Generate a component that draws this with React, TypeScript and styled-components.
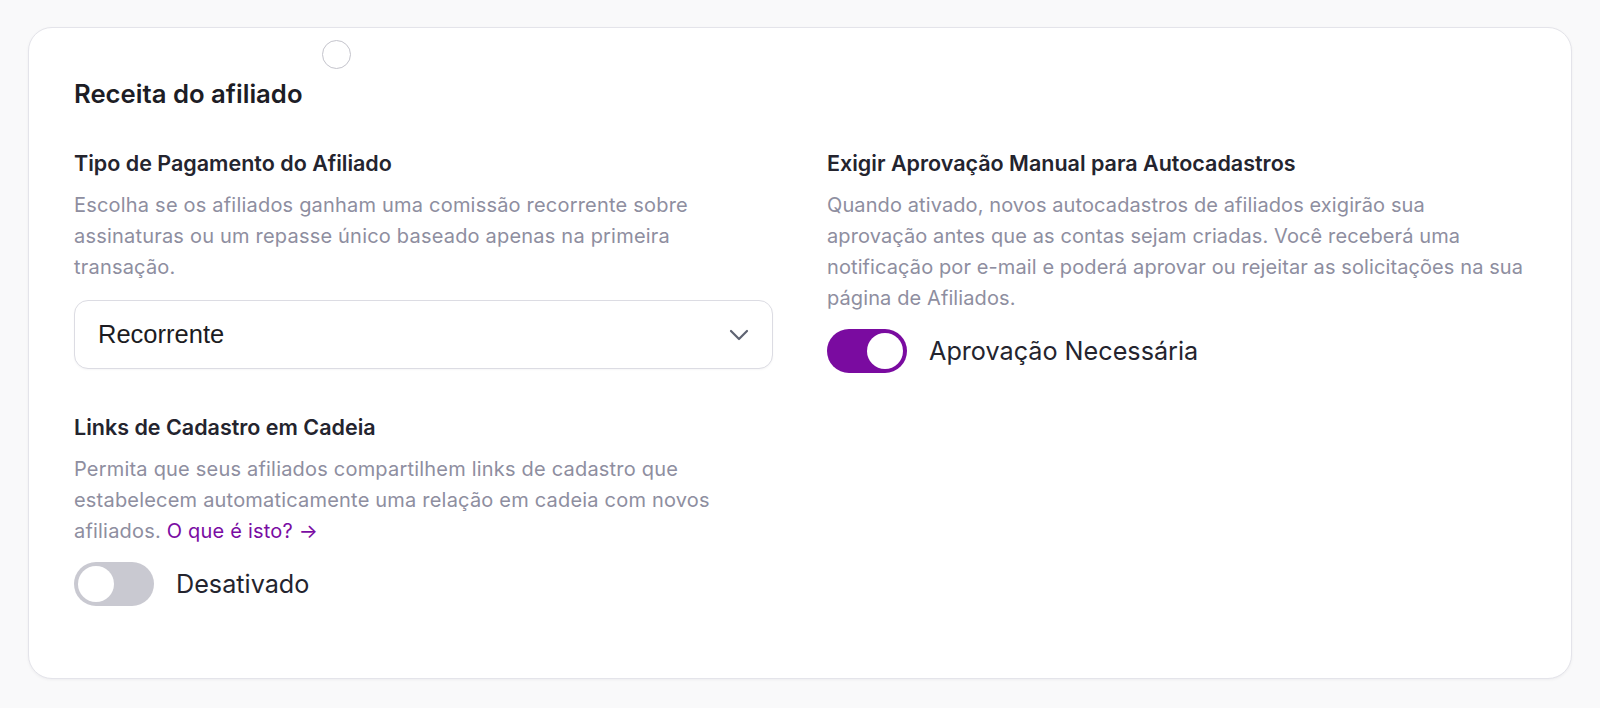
import React from 'react'
import styled, { createGlobalStyle } from 'styled-components'

const GlobalStyle = createGlobalStyle`
    html, body {
        margin: 0;
        padding: 0;
        background: #f9f9fa;
    }
    body {
        font-family: "Inter", "Noto Sans", sans-serif;
        -webkit-font-smoothing: antialiased;
    }
`

const Page = styled.div`
    padding: 27px 28px 30px 28px;
`

const Card = styled.section`
    position: relative;
    background: #ffffff;
    border: 1.5px solid #e4e4ea;
    border-radius: 24px;
    box-shadow: 0 1px 3px rgba(20, 20, 40, 0.05);
    padding: 50px 45px 72px 45px;
`

const Spinner = styled.span`
    position: absolute;
    top: 12px;
    left: 293px;
    width: 27px;
    height: 27px;
    border-radius: 50%;
    border: 1.5px solid #c4c4cc;
    background: #ffffff;
`

const Title = styled.h2`
    margin: 0 0 39px 0;
    font-size: 25.7px;
    line-height: 32px;
    font-weight: 600;
    color: #1d1d25;
`

const Columns = styled.div`
    display: grid;
    grid-template-columns: 1fr 1fr;
    column-gap: 54px;
    align-items: start;
`

const Column = styled.div`
    display: flex;
    flex-direction: column;
    gap: 44px;
`

const Field = styled.div`
    display: flex;
    flex-direction: column;
`

const Label = styled.h3`
    margin: 0 0 13px 0;
    font-size: 21.5px;
    line-height: 28px;
    font-weight: 600;
    color: #24242e;
`

const Description = styled.p<{ $tight?: boolean; $loose?: boolean }>`
    margin: 0 0 ${p => (p.$tight ? '15px' : '17px')} 0;
    font-size: 20px;
    line-height: 31px;
    letter-spacing: ${p => (p.$loose ? '0.2px' : '0.1px')};
    font-weight: 400;
    color: #8e8ea0;
`

const Link = styled.a`
    color: #7a0ca3;
    text-decoration: none;
`

const SelectBox = styled.div`
    display: flex;
    align-items: center;
    justify-content: space-between;
    height: 67px;
    padding: 0 23px 0 23px;
    border: 1.5px solid #dcdce3;
    border-radius: 14px;
    background: #ffffff;
    box-shadow: 0 1px 2px rgba(20, 20, 40, 0.04);
`

const SelectValue = styled.span`
    font-family: "Liberation Sans", Arial, sans-serif;
    font-size: 25.5px;
    color: #1c1c22;
`

const ToggleRow = styled.div`
    display: flex;
    align-items: center;
    gap: 22px;
`

const Track = styled.span<{ $on?: boolean }>`
    position: relative;
    flex: none;
    width: 80px;
    height: 44px;
    border-radius: 22px;
    background: ${p => (p.$on ? '#7a0ba0' : '#c9c9d1')};
`

const Knob = styled.span<{ $on?: boolean }>`
    position: absolute;
    top: 4px;
    left: ${p => (p.$on ? '40px' : '4px')};
    width: 36px;
    height: 36px;
    border-radius: 50%;
    background: #ffffff;
`

const ToggleText = styled.span`
    font-size: 25.2px;
    line-height: 32px;
    color: #24242e;
`

const Chevron = () => (
    <svg width="20" height="12" viewBox="0 0 20 12" fill="none">
        <path d="M2 2 L10 10 L18 2" stroke="#5e6372" strokeWidth="2.2" strokeLinecap="round" strokeLinejoin="round" />
    </svg>
)

const Toggle: React.FC<{ on?: boolean; label: string }> = ({ on, label }) => (
    <ToggleRow>
        <Track $on={on}><Knob $on={on} /></Track>
        <ToggleText>{label}</ToggleText>
    </ToggleRow>
)

const App: React.FC = () => {
    return (
        <Page>
            <GlobalStyle />
            <Card>
                <Spinner />
                <Title>Receita do afiliado</Title>
                <Columns>
                    <Column>
                        <Field>
                            <Label>Tipo de Pagamento do Afiliado</Label>
                            <Description $loose>
                                Escolha se os afiliados ganham uma comissão recorrente sobre assinaturas ou um repasse único baseado apenas na primeira transação.
                            </Description>
                            <SelectBox>
                                <SelectValue>Recorrente</SelectValue>
                                <Chevron />
                            </SelectBox>
                        </Field>
                        <Field>
                            <Label>Links de Cadastro em Cadeia</Label>
                            <Description $tight $loose>
                                Permita que seus afiliados compartilhem links de cadastro que estabelecem automaticamente uma relação em cadeia com novos afiliados. <Link href="#">O que é isto? →</Link>
                            </Description>
                            <Toggle label="Desativado" />
                        </Field>
                    </Column>
                    <Column>
                        <Field>
                            <Label>Exigir Aprovação Manual para Autocadastros</Label>
                            <Description $tight>
                                Quando ativado, novos autocadastros de afiliados exigirão sua aprovação antes que as contas sejam criadas. Você receberá uma notificação por e-mail e poderá aprovar ou rejeitar as solicitações na sua página de Afiliados.
                            </Description>
                            <Toggle on label="Aprovação Necessária" />
                        </Field>
                    </Column>
                </Columns>
            </Card>
        </Page>
    )
}

export default App
